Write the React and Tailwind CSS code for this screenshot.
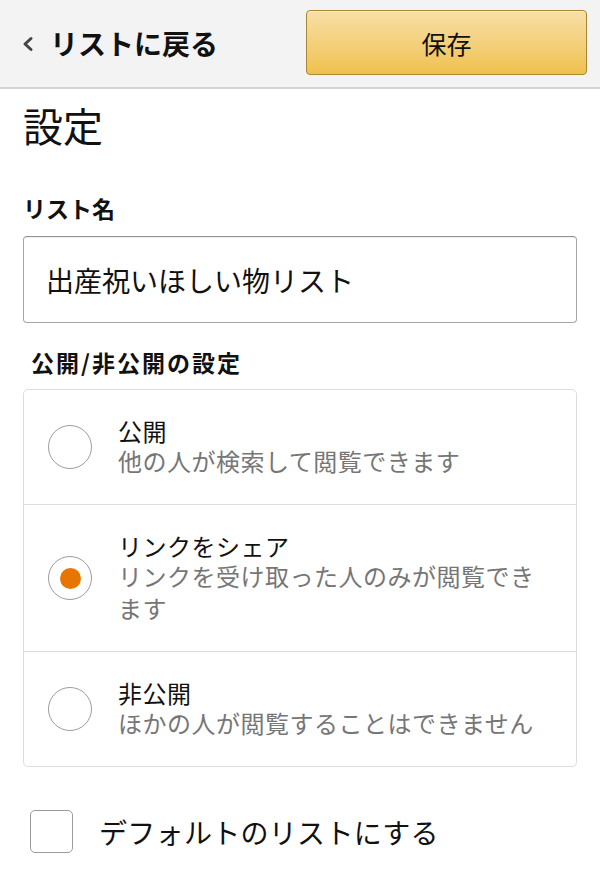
import { useState } from 'react';

const options = [
  { id: 'public', title: '公開', desc: '他の人が検索して閲覧できます' },
  { id: 'link', title: 'リンクをシェア', desc: 'リンクを受け取った人のみが閲覧できます' },
  { id: 'private', title: '非公開', desc: 'ほかの人が閲覧することはできません' },
];

function Radio({ checked }) {
  return (
    <span className="flex h-[44px] w-[44px] shrink-0 items-center justify-center rounded-full border-[1.5px] border-[#9c9c9c] bg-white">
      {checked && <span className="h-[21px] w-[21px] rounded-full bg-[#e77600]" />}
    </span>
  );
}

export default function App() {
  const [privacy, setPrivacy] = useState('link');
  const [isDefault, setIsDefault] = useState(false);
  const [name, setName] = useState('出産祝いほしい物リスト');

  return (
    <div className="min-h-screen bg-white text-[#111] font-['Noto_Sans_CJK_JP','Noto_Sans',sans-serif]">
      {/* Header */}
      <div className="flex h-[89px] items-center justify-between border-b-2 border-[#d3d3d3] bg-[#f3f3f3] pl-[22px] pr-[13px] pb-[2px]">
        <button className="flex items-center gap-[16px]">
          <svg width="12" height="16" viewBox="0 0 12 16" className="mt-[2px]">
            <polyline
              points="9,2.5 3,8 9,13.5"
              fill="none"
              stroke="#444"
              strokeWidth="3"
              strokeLinecap="round"
              strokeLinejoin="round"
            />
          </svg>
          <span className="text-[28px] font-bold leading-[32px] text-[#111]">リストに戻る</span>
        </button>
        <button className="h-[65px] w-[281px] rounded-[4px] border border-[#a88734] bg-gradient-to-b from-[#f7dfa5] to-[#f0c14b] text-[25px] leading-[30px] text-[#111] shadow-[inset_0_1px_0_rgba(255,255,255,0.4)]">
          保存
        </button>
      </div>

      {/* Content */}
      <div className="px-[23px]">
        <h1 className="mt-[12px] text-[40px] font-normal leading-[48px] text-[#111]">設定</h1>

        <label className="mt-[44px] block text-[23px] font-bold leading-[30px] text-[#111]">リスト名</label>
        <input
          value={name}
          onChange={(e) => setName(e.target.value)}
          className="mt-[13px] block h-[87px] w-full rounded-[4px] border-[1.5px] border-[#a6a6a6] border-t-[#949494] bg-white px-[22px] text-[28px] text-[#111] shadow-[inset_0_1px_0_rgba(0,0,0,0.07)] outline-none"
        />

        <div className="ml-[8px] mt-[24px] text-[23px] font-bold leading-[30px] tracking-[2px] text-[#111]">
          公開/非公開の設定
        </div>

        <div className="mt-[12px] rounded-[5px] border border-[#dddddd] divide-y divide-[#dddddd]">
          {options.map((o) => (
            <button
              key={o.id}
              onClick={() => setPrivacy(o.id)}
              className="flex w-full items-center gap-[26px] py-[27px] pl-[24px] pr-[33px] text-left"
            >
              <Radio checked={privacy === o.id} />
              <div className="flex-1">
                <div className="text-[24px] leading-[28px] tracking-[0.5px] text-[#111]">{o.title}</div>
                <div className="text-[24px] leading-[32px] tracking-[0.5px] text-[#767676]">{o.desc}</div>
              </div>
            </button>
          ))}
        </div>

        <button
          onClick={() => setIsDefault(!isDefault)}
          className="mt-[43px] flex items-center gap-[26px] pl-[7px] text-left"
        >
          <span className="flex h-[43px] w-[43px] items-center justify-center rounded-[5px] border-[1.5px] border-[#9c9c9c] bg-white">
            {isDefault && (
              <svg width="26" height="20" viewBox="0 0 26 20">
                <polyline points="3,10 10,17 23,3" fill="none" stroke="#e77600" strokeWidth="3" />
              </svg>
            )}
          </span>
          <span className="text-[28px] leading-[34px] tracking-[0.3px] text-[#111]">デフォルトのリストにする</span>
        </button>
      </div>
    </div>
  );
}
